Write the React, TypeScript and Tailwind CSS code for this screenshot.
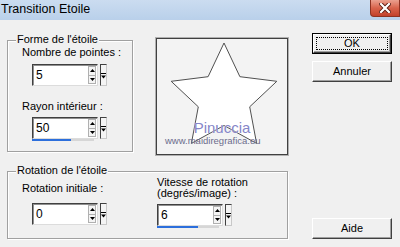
import React from 'react'

// tiny arrows for the spin buttons
function Arrow({ up }: { up?: boolean }) {
  return (
    <svg width="5" height="3" viewBox="0 0 5 3" className="block">
      {up ? <path d="M2.5 0 L5 3 L0 3 Z" fill="#000" /> : <path d="M0 0 L5 0 L2.5 3 Z" fill="#000" />}
    </svg>
  )
}

interface SpinFieldProps {
  value: string
  barClass?: string
}

function SpinField({ value, barClass }: SpinFieldProps) {
  return (
    <div className="w-[75px]">
      <div className="flex h-[22px]">
        <div className="flex flex-1 border border-t-[#404040] border-l-[#404040] border-r-[#dcdcdc] border-b-[#dcdcdc] bg-white shadow-[inset_1px_1px_0_#909090]">
          <span className="flex-1 pl-[3px] pt-[1px] text-[12px] leading-[18px] text-black">{value}</span>
          <div className="flex w-[9px] flex-col py-[1px] pr-[1px]">
            <div className="flex flex-1 items-center justify-center border border-[#b0b0b0] bg-[#f4f4f4]">
              <Arrow up />
            </div>
            <div className="flex flex-1 items-center justify-center border border-t-0 border-[#b0b0b0] bg-[#f4f4f4]">
              <Arrow />
            </div>
          </div>
        </div>
        <div className="ml-[2px] flex w-[7px] items-center justify-center border border-t-[#404040] border-l-[#404040] border-r-[#c8c8c8] border-b-[#c8c8c8] bg-[#f4f4f4]">
          <svg width="5" height="7" viewBox="0 0 5 7" className="block">
            <path d="M0 1.5 H5" stroke="#000" strokeWidth="1" />
            <path d="M0 3.5 L5 3.5 L2.5 6.5 Z" fill="#000" />
          </svg>
        </div>
      </div>
      {barClass && (
        <div className="h-[2px] w-[62px] bg-[#d6d6d6]">
          <div className={`h-full bg-[#2c6fdc] ${barClass}`} />
        </div>
      )}
    </div>
  )
}

function GroupBox({ title, className, children }: { title: string; className: string; children: React.ReactNode }) {
  return (
    <div className={`relative border border-[#a0a0a0] shadow-[inset_1px_1px_0_#fff,1px_1px_0_#fff] ${className}`}>
      <span className="absolute -top-[8px] left-[8px] bg-[#f0f0f0] px-[1px] text-[11px] leading-[13px] text-black">
        {title}
      </span>
      {children}
    </div>
  )
}

function WinButton({ label, isDefault }: { label: string; isDefault?: boolean }) {
  return (
    <div className={`h-[21px] w-[80px] ${isDefault ? 'border border-black' : ''}`}>
      <div className="relative flex h-full items-center justify-center border border-t-white border-l-white border-r-[#404040] border-b-[#404040] bg-[#f0f0f0] text-[11px] text-black shadow-[inset_-1px_-1px_0_#a0a0a0]">
        {isDefault && <div className="absolute inset-[2px] border border-dotted border-black" />}
        <span className="relative">{label}</span>
      </div>
    </div>
  )
}

export default function App() {
  const cx = 67
  const cy = 59.5
  const R = 55.5
  const r = 27
  const starPoints = Array.from({ length: 10 }, (_, i) => {
    const a = ((-90 + i * 36) * Math.PI) / 180
    const rad = i % 2 === 0 ? R : r
    return `${(cx + rad * Math.cos(a)).toFixed(1)},${(cy + rad * Math.sin(a)).toFixed(1)}`
  }).join(' ')

  return (
    <div className="h-[247px] w-[400px] overflow-hidden bg-[#f0f0f0] font-['Liberation_Sans',Arial,sans-serif]">
      {/* title bar */}
      <div className="flex h-[20px] items-start justify-between bg-gradient-to-b from-[#cbdcf0] to-[#b9d0ea]">
        <span className="pl-[1px] pt-[2px] text-[12.5px] leading-[15px] text-black">Transition Etoile</span>
        <div className="flex h-[17px] w-[30px] items-center justify-center rounded-bl-[4px] border border-t-0 border-[#8e3322] bg-gradient-to-b from-[#eaa08f] via-[#d8634b] to-[#c2412b]">
          <svg width="12" height="10" viewBox="0 0 12 10">
            <path d="M2 1 L10 9 M10 1 L2 9" stroke="#5a1a10" strokeWidth="4" strokeLinecap="square" />
            <path d="M2 1 L10 9 M10 1 L2 9" stroke="#fff" strokeWidth="2.2" strokeLinecap="square" />
          </svg>
        </div>
      </div>

      {/* body */}
      <div className="flex h-[227px] pl-[7px]">
        <div className="w-[281px]">
          <div className="flex items-start pt-[18px]">
            <GroupBox title="Forme de l'étoile" className="mt-[2px] h-[112px] w-[126px]">
              <div className="pl-[14px] pt-[5px]">
                <div className="text-[11px] leading-[13px] text-black">Nombre de pointes :</div>
                <div className="ml-[10px] mt-[5px]">
                  <SpinField value="5" />
                </div>
                <div className="mt-[14px] text-[11px] leading-[13px] text-black">Rayon intérieur :</div>
                <div className="ml-[10px] mt-[4px]">
                  <SpinField value="50" barClass="w-[39px]" />
                </div>
              </div>
            </GroupBox>

            {/* star preview */}
            <div className="relative ml-[23px] h-[117px] w-[132px] border border-[#404040] bg-[#f3f3f3] shadow-[0_0_0_1px_#b0b0b0]">
              <svg width="130" height="115" viewBox="0 0 130 115" className="block">
                <polygon points={starPoints} fill="#fff" stroke="#505050" strokeWidth="1" />
              </svg>
              <span className="absolute left-0 right-0 top-[80px] text-center text-[15px] leading-[17px] text-[#8585c8] [text-shadow:0_0_1px_#fff]">
                Pinuccia
              </span>
              <span className="absolute left-[8px] top-[96px] text-[9.5px] leading-[12px] text-[#6c6c8c]">
                www.maidiregrafica.eu
              </span>
            </div>
          </div>

          <GroupBox title="Rotation de l'étoile" className="mt-[16px] h-[68px] w-[281px]">
            <div className="flex pl-[14px] pt-[5px]">
              <div className="w-[135px]">
                <div className="mt-[5px] text-[11px] leading-[13px] text-black">Rotation initiale :</div>
                <div className="ml-[10px] mt-[8px]">
                  <SpinField value="0" />
                </div>
              </div>
              <div>
                <div className="text-[11px] leading-[11px] text-black">
                  Vitesse de rotation
                  <br />
                  (degrés/image) :
                </div>
                <div className="mt-[5px]">
                  <SpinField value="6" barClass="w-[41px]" />
                </div>
              </div>
            </div>
          </GroupBox>
        </div>

        {/* buttons */}
        <div className="ml-[24px] flex w-[80px] flex-col pb-[8px] pt-[13px]">
          <WinButton label="OK" isDefault />
          <div className="mt-[7px]">
            <WinButton label="Annuler" />
          </div>
          <div className="mt-auto">
            <WinButton label="Aide" />
          </div>
        </div>
      </div>
    </div>
  )
}
